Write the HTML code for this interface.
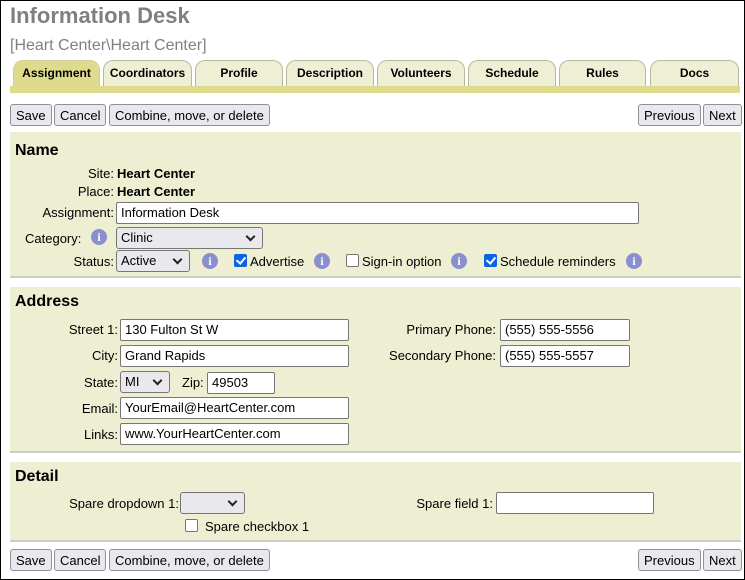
<!DOCTYPE html>
<html><head><meta charset="utf-8"><style>
*{box-sizing:border-box}
body{margin:0;width:745px;height:580px;overflow:hidden;font-family:"Liberation Sans",Arial,sans-serif;font-size:13px;color:#000;background:#fff}
.frame{position:absolute;left:0;top:0;width:745px;height:580px;border:1px solid #000}
.a{position:absolute;white-space:nowrap}
.tab{position:absolute;top:60px;height:27px;background:#efefd6;border:1px solid #b8b8a0;border-bottom:none;border-radius:10px 10px 0 0;text-align:center;font-weight:bold;font-size:12px;line-height:25px}
.tab.on{background:#dedc8c;border-color:#cfcf9a}
.bar{position:absolute;left:10px;top:86px;width:730px;height:7px;background:#dedc8c}
.btn{position:absolute;height:22px;background:#e9e9ed;border:1px solid #8f8f9d;border-radius:3px;font-size:13px;line-height:21px;padding:0 5px}
.sec{position:absolute;left:10px;width:731px;background:#edeed2;border-bottom:2px solid #cfcfc0}
h3{position:absolute;margin:0;font-size:16px;font-weight:bold}
.lbl{position:absolute;text-align:right;white-space:nowrap}
.inp{position:absolute;height:22px;background:#fff;border:1px solid #767676;border-radius:2px;padding:0 4px;line-height:20px;font-size:13px}
.sel{position:absolute;height:22px;background:#e9e9ed;border:1px solid #767676;border-radius:3px;padding:0 4px;line-height:20px}
.sel:after{content:"";position:absolute;right:8px;top:5px;width:5px;height:5px;border-right:2px solid #222;border-bottom:2px solid #222;transform:rotate(45deg)}
.i{position:absolute;width:16px;height:16px;border-radius:50%;background:#8a8fd0;color:#fff;font-weight:bold;font-size:12px;text-align:center;line-height:16px;font-family:"Liberation Serif",serif}
.cb{position:absolute;width:13px;height:13px;border:1px solid #767676;border-radius:2px;background:#fff}
.cb.on{background:#0b63e5;border-color:#0b63e5}
.cb.on:after{content:"";position:absolute;left:3px;top:0px;width:4px;height:7px;border-right:2px solid #fff;border-bottom:2px solid #fff;transform:rotate(40deg)}
</style></head><body>
<div class="frame"></div>
<div class="a" style="left:10px;top:3px;font-size:22px;font-weight:bold;color:#808080">Information Desk</div>
<div class="a" style="left:10px;top:37px;font-size:16px;color:#808080">[Heart Center\Heart Center]</div>

<div class="tab on" style="left:13px;width:87px">Assignment</div>
<div class="tab" style="left:103px;width:89px">Coordinators</div>
<div class="tab" style="left:195px;width:88px">Profile</div>
<div class="tab" style="left:286px;width:88px">Description</div>
<div class="tab" style="left:377px;width:88px">Volunteers</div>
<div class="tab" style="left:468px;width:88px">Schedule</div>
<div class="tab" style="left:559px;width:87px">Rules</div>
<div class="tab" style="left:650px;width:89px">Docs</div>
<div class="bar"></div>

<div class="btn" style="left:10px;top:104px">Save</div>
<div class="btn" style="left:54px;top:104px">Cancel</div>
<div class="btn" style="left:109px;top:104px">Combine, move, or delete</div>
<div class="btn" style="left:638px;top:104px">Previous</div>
<div class="btn" style="left:703px;top:104px">Next</div>

<div class="sec" style="top:132px;height:146px"></div>
<h3 style="left:15px;top:142px">Name</h3>
<div class="lbl" style="right:631px;top:166px">Site:</div><div class="a" style="left:117px;top:166px;font-weight:bold">Heart Center</div>
<div class="lbl" style="right:631px;top:184px">Place:</div><div class="a" style="left:117px;top:184px;font-weight:bold">Heart Center</div>
<div class="lbl" style="right:631px;top:205px">Assignment:</div>
<div class="inp" style="left:116px;top:202px;width:523px">Information Desk</div>
<div class="lbl" style="left:25px;top:231px">Category:</div>
<div class="i" style="left:91px;top:229px">i</div>
<div class="sel" style="left:116px;top:227px;width:147px">Clinic</div>
<div class="lbl" style="right:631px;top:254px">Status:</div>
<div class="sel" style="left:116px;top:250px;width:74px">Active</div>
<div class="i" style="left:202px;top:253px">i</div>
<div class="cb on" style="left:234px;top:254px"></div><div class="a" style="left:250px;top:254px">Advertise</div>
<div class="i" style="left:314px;top:253px">i</div>
<div class="cb" style="left:346px;top:254px"></div><div class="a" style="left:362px;top:254px">Sign-in option</div>
<div class="i" style="left:451px;top:253px">i</div>
<div class="cb on" style="left:484px;top:254px"></div><div class="a" style="left:500px;top:254px">Schedule reminders</div>
<div class="i" style="left:626px;top:253px">i</div>

<div class="sec" style="top:287px;height:166px"></div>
<h3 style="left:15px;top:293px">Address</h3>
<div class="lbl" style="right:627px;top:322px">Street 1:</div><div class="inp" style="left:120px;top:319px;width:229px">130 Fulton St W</div>
<div class="lbl" style="right:627px;top:348px">City:</div><div class="inp" style="left:120px;top:345px;width:229px">Grand Rapids</div>
<div class="lbl" style="right:627px;top:375px">State:</div><div class="sel" style="left:120px;top:371px;width:50px">MI</div>
<div class="a" style="left:182px;top:375px">Zip:</div><div class="inp" style="left:207px;top:372px;width:68px">49503</div>
<div class="lbl" style="right:627px;top:401px">Email:</div><div class="inp" style="left:120px;top:397px;width:229px">YourEmail@HeartCenter.com</div>
<div class="lbl" style="right:627px;top:427px">Links:</div><div class="inp" style="left:120px;top:423px;width:229px">www.YourHeartCenter.com</div>
<div class="lbl" style="right:249px;top:322px">Primary Phone:</div><div class="inp" style="left:500px;top:319px;width:130px">(555) 555-5556</div>
<div class="lbl" style="right:249px;top:348px">Secondary Phone:</div><div class="inp" style="left:500px;top:345px;width:130px">(555) 555-5557</div>

<div class="sec" style="top:462px;height:80px"></div>
<h3 style="left:15px;top:468px">Detail</h3>
<div class="lbl" style="right:566px;top:496px">Spare dropdown 1:</div>
<div class="sel" style="left:180px;top:492px;width:65px"></div>
<div class="cb" style="left:185px;top:519px"></div><div class="a" style="left:205px;top:519px">Spare checkbox 1</div>
<div class="lbl" style="right:252px;top:496px">Spare field 1:</div><div class="inp" style="left:496px;top:492px;width:158px"></div>

<div class="btn" style="left:10px;top:549px">Save</div>
<div class="btn" style="left:54px;top:549px">Cancel</div>
<div class="btn" style="left:109px;top:549px">Combine, move, or delete</div>
<div class="btn" style="left:638px;top:549px">Previous</div>
<div class="btn" style="left:703px;top:549px">Next</div>
</body></html>
